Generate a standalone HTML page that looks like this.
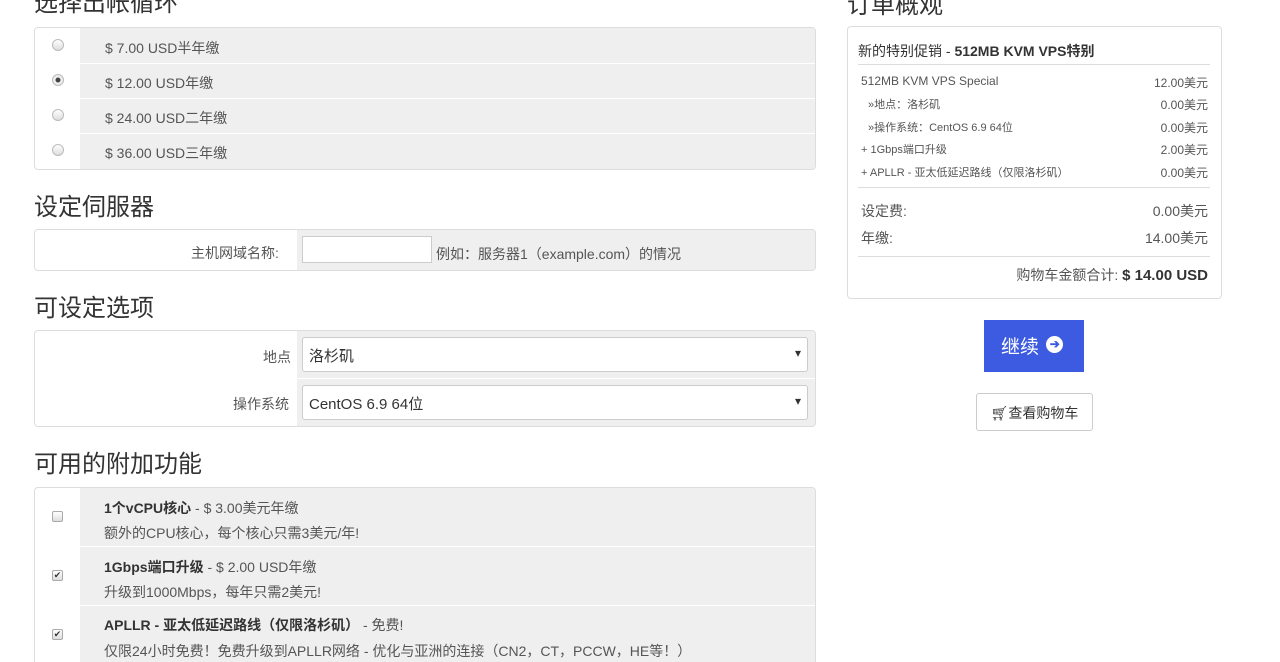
<!DOCTYPE html>
<html><head><meta charset="utf-8"><style>
*{box-sizing:border-box;margin:0;padding:0}
html,body{width:1280px;height:662px;overflow:hidden}
body{background:#fff;font-family:"Liberation Sans","Noto Sans CJK SC",sans-serif;color:#333;position:relative}
.a{position:absolute}
h2{position:absolute;font-weight:normal;font-size:24px;color:#333;white-space:nowrap}
.panel{position:absolute;border:1px solid #ddd;border-radius:4px;background:#fff;overflow:hidden}
.g{position:absolute;background:#efefef}
.t{position:absolute;font-size:14px;color:#555;white-space:nowrap}
.radio{position:absolute;width:12px;height:12px;border-radius:50%;border:1px solid #bbb;background:linear-gradient(#fff,#ddd)}
.cb{position:absolute;width:11px;height:11px;border:1px solid #aaa;border-radius:2px;background:linear-gradient(#fff,#ddd);font-size:9px;line-height:9px;text-align:center;color:#333}
.sel{position:absolute;border:1px solid #ccc;border-radius:3px;background:#fff;font-size:15px;padding:7px 6px;color:#333}
.sel:after{content:"▾";position:absolute;right:6px;top:8px;font-size:12px}
.r{position:absolute;font-size:12px;color:#555;white-space:nowrap}
</style></head><body>
<h2 style="left:34px;top:-17px">选择出帐循环</h2>
<div class="panel" style="left:34px;top:27px;width:782px;height:143px">
 <div class="g" style="left:45px;top:0;width:737px;height:35px"></div>
 <div class="g" style="left:45px;top:36px;width:737px;height:34px"></div>
 <div class="g" style="left:45px;top:71px;width:737px;height:34px"></div>
 <div class="g" style="left:45px;top:106px;width:737px;height:36px"></div>
 <div class="radio" style="left:17px;top:11px"></div>
 <div class="radio" style="left:17px;top:46px;background:radial-gradient(#444 30%,#eee 40%)"></div>
 <div class="radio" style="left:17px;top:81px"></div>
 <div class="radio" style="left:17px;top:116px"></div>
 <div class="t" style="left:70px;top:10px">$ 7.00 USD半年缴</div>
 <div class="t" style="left:70px;top:45px">$ 12.00 USD年缴</div>
 <div class="t" style="left:70px;top:80px">$ 24.00 USD二年缴</div>
 <div class="t" style="left:70px;top:115px">$ 36.00 USD三年缴</div>
</div>
<h2 style="left:34px;top:187px">设定伺服器</h2>
<div class="panel" style="left:34px;top:229px;width:782px;height:42px">
 <div class="g" style="left:262px;top:0;width:520px;height:42px"></div>
 <div class="t" style="left:156px;top:13px">主机网域名称:</div>
 <div class="a" style="left:267px;top:6px;width:130px;height:27px;border:1px solid #ccc;background:#fff"></div>
 <div class="t" style="left:401px;top:14px">例如：服务器1（example.com）的情况</div>
</div>
<h2 style="left:34px;top:288px">可设定选项</h2>
<div class="panel" style="left:34px;top:330px;width:782px;height:97px">
 <div class="g" style="left:262px;top:0;width:520px;height:47px"></div>
 <div class="g" style="left:262px;top:48px;width:520px;height:49px"></div>
 <div class="t" style="left:228px;top:16px">地点</div>
 <div class="t" style="left:198px;top:63px">操作系统</div>
 <div class="sel" style="left:267px;top:6px;width:506px;height:35px">洛杉矶</div>
 <div class="sel" style="left:267px;top:54px;width:506px;height:35px">CentOS 6.9 64位</div>
</div>
<h2 style="left:34px;top:444px">可用的附加功能</h2>
<div class="panel" style="left:34px;top:487px;width:782px;height:190px">
 <div class="g" style="left:45px;top:0;width:737px;height:58px"></div>
 <div class="g" style="left:45px;top:59px;width:737px;height:58px"></div>
 <div class="g" style="left:45px;top:118px;width:737px;height:72px"></div>
 <div class="cb" style="left:17px;top:23px"></div>
 <div class="cb" style="left:17px;top:82px">✔</div>
 <div class="cb" style="left:17px;top:141px">✔</div>
 <div class="t" style="left:69px;top:10px"><b style="color:#333">1个vCPU核心</b> - $ 3.00美元年缴</div>
 <div class="t" style="left:69px;top:35px">额外的CPU核心，每个核心只需3美元/年!</div>
 <div class="t" style="left:69px;top:69px"><b style="color:#333">1Gbps端口升级</b> - $ 2.00 USD年缴</div>
 <div class="t" style="left:69px;top:94px">升级到1000Mbps，每年只需2美元!</div>
 <div class="t" style="left:69px;top:127px"><b style="color:#333">APLLR - 亚太低延迟路线（仅限洛杉矶）</b> - 免费!</div>
 <div class="t" style="left:69px;top:153px">仅限24小时免费！免费升级到APLLR网络 - 优化与亚洲的连接（CN2，CT，PCCW，HE等！）</div>
</div>
<h2 style="left:847px;top:-15px">订单概观</h2>
<div class="panel" style="left:847px;top:26px;width:375px;height:273px">
 <div class="t" style="left:10px;top:14px;color:#333">新的特别促销 - <b>512MB KVM VPS特别</b></div>
 <div class="a" style="left:10px;top:37px;width:352px;border-top:1px solid #ddd"></div>
 <div class="r" style="left:13px;top:47px">512MB KVM VPS Special</div><div class="r" style="right:13px;top:47px">12.00美元</div>
 <div class="r" style="left:20px;top:69px;font-size:11px">»地点：洛杉矶</div><div class="r" style="right:13px;top:69px">0.00美元</div>
 <div class="r" style="left:20px;top:92px;font-size:11px">»操作系统：CentOS 6.9 64位</div><div class="r" style="right:13px;top:92px">0.00美元</div>
 <div class="r" style="left:13px;top:114px;font-size:11px">+ 1Gbps端口升级</div><div class="r" style="right:13px;top:114px">2.00美元</div>
 <div class="r" style="left:13px;top:137px;font-size:11px">+ APLLR - 亚太低延迟路线（仅限洛杉矶）</div><div class="r" style="right:13px;top:137px">0.00美元</div>
 <div class="a" style="left:10px;top:160px;width:352px;border-top:1px solid #ddd"></div>
 <div class="t" style="left:13px;top:174px">设定费:</div><div class="t" style="right:13px;top:174px">0.00美元</div>
 <div class="t" style="left:13px;top:201px">年缴:</div><div class="t" style="right:13px;top:201px">14.00美元</div>
 <div class="a" style="left:10px;top:229px;width:352px;border-top:1px solid #ddd"></div>
 <div class="t" style="right:13px;top:238px"><span style="font-size:14px">购物车金额合计:</span> <b style="color:#333;font-size:15px">$ 14.00 USD</b></div>
</div>
<div class="a" style="left:984px;top:320px;width:100px;height:52px;background:#3c5be0;color:#fff;font-size:19px;line-height:56px;padding-left:17px">继续 <span style="display:inline-block;width:17px;height:17px;border-radius:50%;background:#fff;color:#3c5be0;font-size:12px;line-height:17px;text-align:center;font-weight:bold;vertical-align:5px;margin-left:2px">➔</span></div>
<div class="a" style="left:976px;top:393px;width:117px;height:38px;border:1px solid #ccc;border-radius:3px;font-size:14px;line-height:38px;text-align:center;color:#333">🛒︎查看购物车</div>
</body></html>
